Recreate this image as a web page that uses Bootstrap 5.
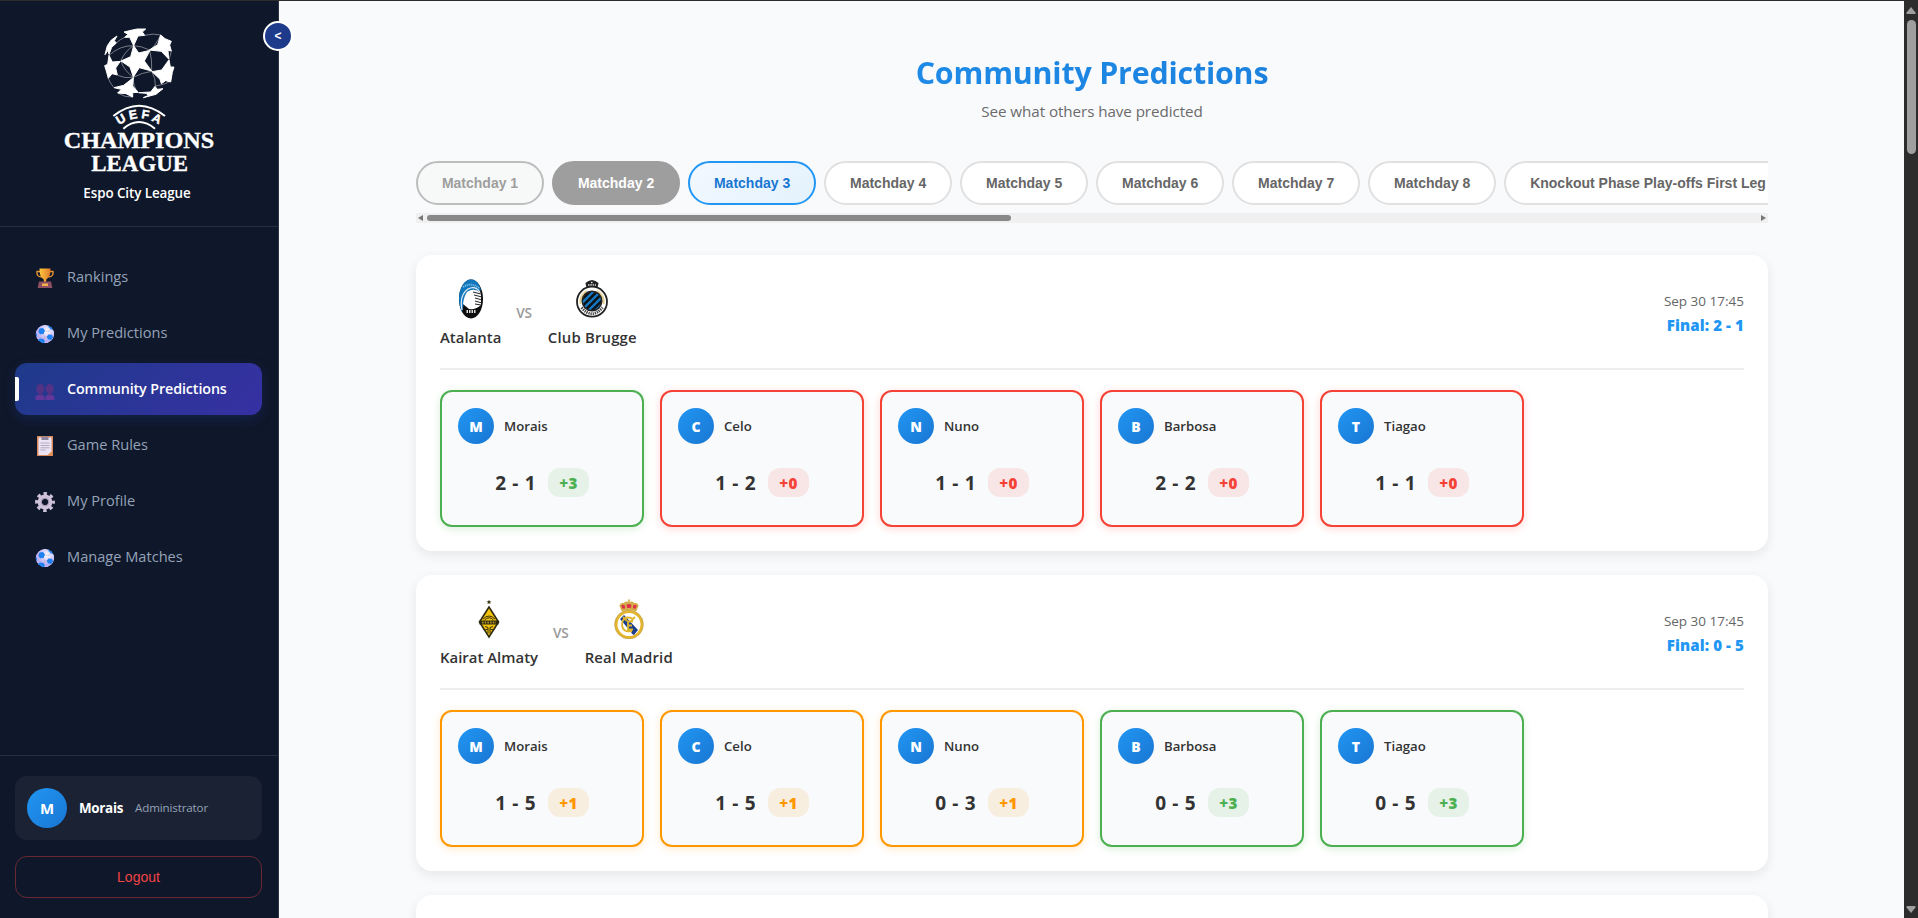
<!DOCTYPE html>
<html lang="en">
<head>
<meta charset="utf-8">
<meta name="viewport" content="width=device-width, initial-scale=1">
<title>Community Predictions</title>
<link href="https://cdn.jsdelivr.net/npm/bootstrap@5.3.0/dist/css/bootstrap.min.css" rel="stylesheet">
<style>
body{font-family:"Open Sans","Noto Sans",sans-serif;background:#f9fafc;height:918px;color:#333;border-top:1px solid #2b2b2e}
.side{width:279px;background:#0f172a;border-right:1px solid #2b3346}
.side-top{height:226px;border-bottom:1px solid #262e40;padding-top:20px}
.league-name{font-size:13.4px;font-weight:600;letter-spacing:-.07px;line-height:20px;margin-top:4px;color:#fff}
.toggle{left:263px;top:21px;width:30px;height:30px;background:#1e3a8a;border:2px solid #fff;color:#fff;font:bold 12px/1 "Liberation Sans",sans-serif;z-index:2}
.menu{padding:24px 16px 0 15px;gap:4px}
.menu a{height:52px;border-radius:12px;padding-left:20px;color:#94a3b8;font-size:14.6px;font-weight:500;text-decoration:none;position:relative}
.menu a svg{width:20px;height:20px;margin:1px 12px 0 0}
.menu a.current{background:linear-gradient(135deg,#1e3a8a,#3730a3);color:#fff;font-weight:600;font-size:14.3px;letter-spacing:-.1px;box-shadow:0 4px 12px rgba(30,58,138,.3)}
.menu a.current::before{content:"";position:absolute;left:0;top:14px;width:4px;height:24px;background:#fff;border-radius:0 2px 2px 0}
.side-foot{border-top:1px solid #262e40;padding:20px 16px 20px 15px}
.user-box{height:64px;border-radius:12px;background:#1b2233;padding:0 12px}
.disc{background:linear-gradient(135deg,#2196f3,#1976d2);color:#fff;border-radius:50%;display:flex;align-items:center;justify-content:center;font-weight:700;flex:none}
.disc.lg{width:40px;height:40px;font-size:15px}
.disc.sm{width:36px;height:36px;font-size:14px;font-weight:800}
.user-name{font-size:13.4px;font-weight:700;letter-spacing:-.3px;color:#fff;margin-left:12px}
.user-role{font-size:11.6px;letter-spacing:-.14px;color:#94a3b8;margin-left:12px}
.logout{height:42px;margin-top:16px;border:1px solid rgba(239,68,68,.4);border-radius:12px;background:none;color:#ef4444;font:14px "Liberation Sans",sans-serif}
.content{padding:0 136px 0 137px;overflow:hidden;min-width:0}
h1{font-size:30.4px;font-weight:700;letter-spacing:-.2px;line-height:44px;margin:50px 0 0;background:linear-gradient(135deg,#2196f3,#1976d2);-webkit-background-clip:text;background-clip:text;color:transparent}
.sub{font-size:15.2px;letter-spacing:-.07px;line-height:24px;color:#6b6b6b;margin:4px 0 0}
.days{margin-top:38px;gap:8px;overflow:hidden}
.day{height:44px;border:2px solid #e0e0e0;border-radius:25px;background:#fff;color:#666;font:bold 14px "Liberation Sans",sans-serif;padding:0 23.9px;flex:none;white-space:nowrap}
.day.past{border-color:#bdbdbd;background:#f7f8f8;color:#9e9e9e}
.day.shown{border-color:#9e9e9e;background:#9e9e9e;color:#fff}
.day.now{border-color:#2196f3;background:linear-gradient(135deg,#f3f8ff,#e3f2fd);color:#1976d2}
.hbar{height:10px;margin-top:8px;background:#f0f0f0;padding:0 2px}
.hbar i{width:584px;height:6px;border-radius:3px;background:#888;margin-left:4px}
.match{background:#fff;border-radius:16px;padding:24px;height:296px;box-shadow:0 4px 12px rgba(0,0,0,.08);margin-bottom:24px;flex:none}
.match-head{height:91px;border-bottom:2px solid #eee}
.club{font-size:14.9px;font-weight:600;letter-spacing:.02px;line-height:20px}
.club.wide{letter-spacing:.18px}
.club svg{width:40px;height:40px;margin-bottom:8px}
.vs{font-size:13.6px;font-weight:600;color:#999;margin:24px 16px 0 15px;line-height:20px;letter-spacing:-.2px}
.when{font-size:13.5px;line-height:20px;color:#666}
.final{font-size:15.1px;font-weight:800;line-height:20px;color:#2196f3;margin-top:4px;letter-spacing:.1px}
.picks{display:grid;grid-template-columns:repeat(6,1fr);gap:16px;margin-top:20px}
.pick{height:137px;border:2px solid var(--c);border-radius:12px;background:#f8fafc;padding:16px;box-shadow:0 2px 8px var(--s)}
.p3{--c:#4caf50;--s:rgba(76,175,80,.2);--b:#e6f1e8}
.p0{--c:#f44336;--s:rgba(244,67,54,.2);--b:#f8e6e6}
.p1{--c:#ff9800;--s:rgba(255,152,0,.2);--b:#f8eee0}
.pick .who{font-size:13.2px;font-weight:600;margin-left:10px;padding-top:2px}
.score{font-size:19px;font-weight:700;letter-spacing:.65px;line-height:29px;padding-top:1px}
.pts{height:29px;border-radius:12px;background:var(--b);color:var(--c);font-size:15.2px;font-weight:800;line-height:30px;padding:0 11px;letter-spacing:.4px;margin-left:12px}
.pts-row{margin-top:24px}
.rail{width:14px;background:#2c2c2c;padding:6px 0 5px}
.rail i{width:9px;height:134px;border-radius:5px;background:#9f9f9f;margin-top:6px}
</style>
</head>
<body class="d-flex overflow-hidden m-0">
<svg width="0" height="0" class="position-absolute">
<defs>
<linearGradient id="gold" x1="0" x2="1"><stop offset="0" stop-color="#ffc83d"/><stop offset="1" stop-color="#e07a2c"/></linearGradient>
<radialGradient id="pearl" cx=".6" cy=".35"><stop offset="0" stop-color="#fff"/><stop offset="1" stop-color="#b9aef2"/></radialGradient>
<symbol id="ball" viewBox="0 0 20 20"><clipPath id="bc"><circle cx="10" cy="10" r="9.3"/></clipPath><g clip-path="url(#bc)"><circle cx="10" cy="10" r="9.3" fill="url(#pearl)"/><path d="M4.500 4.500l3.500-.5 2 2.500-1.500 3.500-3.500.2L3.300 7.500zM13.500 10.500l3.500.3 1 2.700-2 2.600-3.200-.8-1-2.800zM5 14.500l3.500.5 1.500 2.500-2 2.500H4L2 16.500zM12.500.5l4 1.500 2.500 4-3-.5-2.500-2.500zM0 8l1.600 1.500.5 3L0 13z" fill="#1f80f0"/><path d="M10.300 7.200h3.700l1.800-2M8.300 10.400l1.700 2.600-1.500 2M10 13h2" stroke="#b3a6cf" stroke-width=".6" fill="none"/></g></symbol>
<symbol id="rm-crown" viewBox="0 0 20 12"><path d="M3 11.500L.8 6Q2 3 5 3.500 7 1.500 10 2.500 13 1.500 15 3.500 18 3 19.200 6L17 11.500Q10 9.500 3 11.500z" fill="#d3ad4a"/><path d="M2.500 6.500q1.500-2 3.500-.5l.4 2.500L4 9.200zM7.600 5.500q2.400-2 4.800 0l-.7 2.800H8.300zM14 6q2-1.500 3.500.5l-1.500 2.700-2.400-.7z" fill="#e0304a"/><path d="M10 0v3M9 1h2" stroke="#d3ad4a"/></symbol>
</defs>
</svg>
<aside class="side d-flex flex-column flex-shrink-0">
  <div class="side-top text-center">
    <svg class="d-block mx-auto" width="160" height="158" viewBox="177 63 480 474" fill="#fff">
      <g stroke="#fff" stroke-width="3" stroke-linejoin="round">
      <path d="M401 137L416 159 450 151 433 183 455 213 418 203 400 231 390 201 363 183 392 170z"/>
      <path d="M372 96L397 90 412 87 437 87 427 96 434 106 414 108 401 137 389 112 374 112 384 103z"/>
      <path d="M482 105L495 116 514 124 509 135 514 153 504 151 506 177 484 154 448 150 473 134z"/>
      <path d="M507 179L511 201 522 201 517 217 512 246 497 242 484 251 480 238 456 215 485 210z"/>
      <path d="M465 259L472 268 489 266 468 283 430 293 446 286 438 280 416 278 452 276z"/>
      <path d="M400 233L398 258 414 277 398 278 398 291 378 281 353 279 364 268 342 263 371 256z"/>
      <path d="M327 166L337 186 361 184 347 204 352 225 336 221 325 235 319 213 314 197 323 193z"/>
      <path d="M351 108L343 122 349 129 335 142 327 163 324 151 315 164 322 137 334 120z"/>
      </g>
      <path d="M401 137Q424 138 449 150M401 137Q376 152 362 183M449 150Q465 140 482 105M449 150Q457 180 455 214M455 214Q425 218 400 232M362 183Q375 215 400 232M455 214Q468 236 466 258M400 232Q398 260 415 277M401 137Q360 136 327 166M374 112Q360 118 349 129M434 106Q460 99 482 105M507 178Q512 165 514 153M353 226Q374 236 400 232M342 263Q330 250 325 235M466 258Q500 252 507 245M353 279Q375 293 398 291" fill="none" stroke="#fff" stroke-width="1.600" opacity=".8"/>
      <path id="arc" d="M357 376Q417 333 480 376" fill="none"/>
      <path d="M340 348Q417 286 495 348M370 386Q417 346 465 386" fill="none" stroke="#fff" stroke-width="6"/>
      <text font-family="Liberation Sans" font-weight="bold" font-size="37" stroke="#fff" stroke-width="1.500"><textPath href="#arc" startOffset="0" textLength="128" lengthAdjust="spacing">UEFA</textPath></text>
      <g font-family="Liberation Serif" font-weight="bold" stroke="#fff" stroke-width="1">
      <text x="191" y="445" font-size="69" textLength="452" lengthAdjust="spacingAndGlyphs">CHAMPIONS</text>
      <text x="274" y="512" font-size="69" textLength="290" lengthAdjust="spacingAndGlyphs">LEAGUE</text></g>
    </svg>
    <div class="league-name pe-1">Espo City League</div>
  </div>
  <button class="toggle position-absolute rounded-circle d-flex align-items-center justify-content-center p-0">&lt;</button>
  <nav class="menu d-flex flex-column flex-grow-1">
    <a href="#" class="d-flex align-items-center"><svg viewBox="0 0 20 20"><path d="M5 3.500H2q-.8 5 4.500 5.500M15 3.500h3q.8 5-4.500 5.500" fill="none" stroke="#e8932f" stroke-width="1.400"/><path d="M4.500.5h11q0 9-4 10.500l-.5 3H9l-.5-3q-4-1.500-4-10.500z" fill="url(#gold)"/><path d="M4 13.500h12l1.300 6.500H2.700z" fill="#8f4f63"/><path d="M7 15.500h6v2.500H7z" fill="#f3b34c"/></svg>Rankings</a>
    <a href="#" class="d-flex align-items-center"><svg><use href="#ball"/></svg>My Predictions</a>
    <a href="#" class="current d-flex align-items-center"><svg class="mt-1" viewBox="0 0 20 20" fill="#533285"><ellipse cx="5.300" cy="8" rx="4" ry="5"/><ellipse cx="14.700" cy="8" rx="4" ry="5"/><path d="M.5 19v-2q0-3 3-3h3.300q2.800 0 2.800 3v2zM10.400 19v-2q0-3 3-3h3.300q2.800 0 2.800 3v2z" fill="#63379a"/><path d="M4 12h3v2.500H4zM13 12h3v2.500h-3z"/></svg>Community Predictions</a>
    <a href="#" class="d-flex align-items-center"><svg viewBox="0 0 20 20"><path d="M2 0h16v20H2z" fill="#d98a5c"/><path d="M3.500 1.500h13V16L13 19H3.500z" fill="#ece4f5"/><path d="M16.500 15.500L13 19h3.500z" fill="#e8934b"/><path d="M6.500 .5h7V4h-7z" fill="#8f869c"/><path d="M5.500 7h9M5.500 9.500h9M5.500 11.800h9M5.500 14h5" stroke="#aaa2b8" stroke-width=".9"/></svg>Game Rules</a>
    <a href="#" class="d-flex align-items-center"><svg viewBox="0 0 20 20"><g fill="none" stroke="#cfc3da"><circle cx="10" cy="10" r="5.300" stroke-width="4.200"/><circle cx="10" cy="10" r="8.300" stroke-width="3.200" stroke-dasharray="3.400 3.119" stroke-dashoffset="1.700"/><circle cx="10" cy="10" r="3.800" stroke="#9d90ab" stroke-width=".9"/></g></svg>My Profile</a>
    <a href="#" class="d-flex align-items-center"><svg><use href="#ball"/></svg>Manage Matches</a>
  </nav>
  <div class="side-foot">
    <div class="user-box d-flex align-items-center"><div class="disc lg">M</div><span class="user-name">Morais</span><span class="user-role">Administrator</span></div>
    <button class="logout w-100">Logout</button>
  </div>
</aside>
<main class="content d-flex flex-column flex-grow-1">
  <h1 class="text-center">Community Predictions</h1>
  <p class="sub text-center">See what others have predicted</p>
  <div class="days d-flex flex-shrink-0">
    <button class="day past">Matchday 1</button><button class="day shown">Matchday 2</button><button class="day now">Matchday 3</button><button class="day">Matchday 4</button><button class="day">Matchday 5</button><button class="day">Matchday 6</button><button class="day">Matchday 7</button><button class="day">Matchday 8</button><button class="day">Knockout Phase Play-offs First Leg</button>
  </div>
  <div class="hbar d-flex align-items-center flex-shrink-0 mb-4"><svg width="5" height="6"><path d="M5 0v6L0 3z" fill="#777"/></svg><i></i><svg class="ms-auto" width="5" height="6"><path d="M0 0v6l5-3z" fill="#777"/></svg></div>
  <div class="pt-2 flex-shrink-0"></div>
  <section class="match">
    <div class="match-head d-flex justify-content-between">
      <div class="d-flex align-items-start">
        <div class="club text-center"><svg class="d-block mx-auto" viewBox="0 0 40 40"><clipPath id="ac"><ellipse cx="20" cy="20" rx="12" ry="19.500"/></clipPath><g clip-path="url(#ac)"><path d="M0 0h40v40H0z" fill="#0d0d0f"/><path d="M8 0h18l4 11-16 8-3 14-4-6z" fill="#1278be"/><path d="M16 13q7-5 14 1v12q-5 5-12 4l-6-5q1-8 4-12z" fill="#fff"/><path d="M22 13l8 2M23 16l8 2M24 19l7 2M24 22l7 2M24 25l6 1" stroke="#222" stroke-width="1"/><path d="M11 31Q8 16 17 10q7-4 12 3" stroke="#e8eef3" stroke-width="1.200" fill="none"/><path d="M12 8Q20 3 28 9" stroke="#7ab8df" stroke-width="2" stroke-dasharray="1.200 .8" fill="none"/><path d="M15.500 32.500h9" stroke="#ddd" stroke-width="3" stroke-dasharray="1.500 1"/></g></svg>Atalanta</div>
        <div class="vs">VS</div>
        <div class="club wide text-center"><svg class="d-block mx-auto" viewBox="0 0 40 40"><path d="M14.500 9l-1-5 3-2 3.500-1 3.500 1 3 2-1 5z" fill="#222"/><path d="M16 6h8M19 3.500h2" stroke="#ddd" stroke-width="1.500" stroke-dasharray="1.500 .8"/><circle cx="20" cy="22.700" r="15" fill="#fff" stroke="#222" stroke-width="1.800"/><path d="M8.500 25A12 12 0 0 1 15 12M31.500 25A12 12 0 0 0 25 12" fill="none" stroke="#e6cf95" stroke-width="2.200"/><path d="M9.500 28.500Q20 41 30.500 28.500" fill="none" stroke="#444" stroke-width="2.800" stroke-dasharray="1.300 .9"/><clipPath id="cc"><circle cx="20" cy="22" r="9.500"/></clipPath><g clip-path="url(#cc)"><path d="M10 12h20v20H10z" fill="#101216"/><path d="M8 26L24 10M10 31L30 11M14 34L34 14M20 35L34 21" stroke="#1479c4" stroke-width="2.300"/></g><circle cx="20" cy="22" r="9.800" fill="none" stroke="#222" stroke-width="1.400"/></svg>Club Brugge</div>
      </div>
      <div class="text-end pt-1 mt-1"><div class="when mt-1">Sep 30 17:45</div><div class="final">Final: 2 - 1</div></div>
    </div>
    <div class="picks">
      <div class="pick p3"><div class="d-flex align-items-center"><div class="disc sm">M</div><span class="who">Morais</span></div><div class="pts-row d-flex justify-content-center"><span class="score">2 - 1</span><span class="pts">+3</span></div></div>
      <div class="pick p0"><div class="d-flex align-items-center"><div class="disc sm">C</div><span class="who">Celo</span></div><div class="pts-row d-flex justify-content-center"><span class="score">1 - 2</span><span class="pts">+0</span></div></div>
      <div class="pick p0"><div class="d-flex align-items-center"><div class="disc sm">N</div><span class="who">Nuno</span></div><div class="pts-row d-flex justify-content-center"><span class="score">1 - 1</span><span class="pts">+0</span></div></div>
      <div class="pick p0"><div class="d-flex align-items-center"><div class="disc sm">B</div><span class="who">Barbosa</span></div><div class="pts-row d-flex justify-content-center"><span class="score">2 - 2</span><span class="pts">+0</span></div></div>
      <div class="pick p0"><div class="d-flex align-items-center"><div class="disc sm">T</div><span class="who">Tiagao</span></div><div class="pts-row d-flex justify-content-center"><span class="score">1 - 1</span><span class="pts">+0</span></div></div>
    </div>
  </section>
  <section class="match">
    <div class="match-head d-flex justify-content-between">
      <div class="d-flex align-items-start">
        <div class="club text-center"><svg class="d-block mx-auto" viewBox="0 0 40 40"><path d="M20 .8l.7 1.500 1.600.1-1.200 1.100.4 1.600-1.500-.8-1.500.8.4-1.600-1.200-1.100 1.600-.1z" fill="#3a3410"/><path d="M20 6.500L30.500 23 20 39.500 9.500 23z" fill="#2c280f"/><path d="M20 9.500L28.500 23 20 36.500 11.500 23z" fill="#f2c20d"/><path d="M14 20q6-6 12 0M15.500 21q4.500-4.500 9 0" fill="none" stroke="#3a3410" stroke-width="1"/><path d="M10.500 21.500h19v4h-19z" fill="#2c280f"/><path d="M13 23.500h14" stroke="#b3952a" stroke-width="2" stroke-dasharray="1.500 1.200"/><path d="M16 27.500l3 1v6M24 27.500l-3 1v6M16 31l3-1M24 31l-3-1" stroke="#3a3410" fill="none"/></svg>Kairat Almaty</div>
        <div class="vs">VS</div>
        <div class="club wide text-center"><svg class="d-block mx-auto" viewBox="0 0 40 40"><circle cx="20" cy="25.500" r="13" fill="#fff" stroke="#e4b52c" stroke-width="3"/><circle cx="20" cy="25.500" r="14.300" fill="none" stroke="#b8a15c" stroke-width=".6"/><path d="M11 20l4-4 14 15-4 5q-2 0-3-3z" fill="#1c3f8d"/><path d="M23.500 19.500Q14 16 13 25q0 9 10 7M24 22.500h-5v8h5M19 26.500h4M14 18l4 4M26 18l-5 5" stroke="#e0b52e" stroke-width="1.800" fill="none"/><use href="#rm-crown" x="9.500" y="0" width="21" height="13"/></svg>Real Madrid</div>
      </div>
      <div class="text-end pt-1 mt-1"><div class="when mt-1">Sep 30 17:45</div><div class="final">Final: 0 - 5</div></div>
    </div>
    <div class="picks">
      <div class="pick p1"><div class="d-flex align-items-center"><div class="disc sm">M</div><span class="who">Morais</span></div><div class="pts-row d-flex justify-content-center"><span class="score">1 - 5</span><span class="pts">+1</span></div></div>
      <div class="pick p1"><div class="d-flex align-items-center"><div class="disc sm">C</div><span class="who">Celo</span></div><div class="pts-row d-flex justify-content-center"><span class="score">1 - 5</span><span class="pts">+1</span></div></div>
      <div class="pick p1"><div class="d-flex align-items-center"><div class="disc sm">N</div><span class="who">Nuno</span></div><div class="pts-row d-flex justify-content-center"><span class="score">0 - 3</span><span class="pts">+1</span></div></div>
      <div class="pick p3"><div class="d-flex align-items-center"><div class="disc sm">B</div><span class="who">Barbosa</span></div><div class="pts-row d-flex justify-content-center"><span class="score">0 - 5</span><span class="pts">+3</span></div></div>
      <div class="pick p3"><div class="d-flex align-items-center"><div class="disc sm">T</div><span class="who">Tiagao</span></div><div class="pts-row d-flex justify-content-center"><span class="score">0 - 5</span><span class="pts">+3</span></div></div>
    </div>
  </section>
  <section class="match"></section>
</main>
<div class="rail d-flex flex-column align-items-center flex-shrink-0"><svg width="10" height="7" viewBox="0 0 10 7"><path d="M5 0l4.500 5.500q.5 1.500-1 1.500h-7Q0 7 .5 5.500z" fill="#9f9f9f"/></svg><i></i><svg class="mt-auto" width="10" height="7" viewBox="0 0 10 7"><path d="M5 7L.5 1.500Q0 0 1.500 0h7Q10 0 9.500 1.500z" fill="#9f9f9f"/></svg></div>
<script src="https://cdn.jsdelivr.net/npm/bootstrap@5.3.0/dist/js/bootstrap.bundle.min.js"></script>
</body>
</html>
